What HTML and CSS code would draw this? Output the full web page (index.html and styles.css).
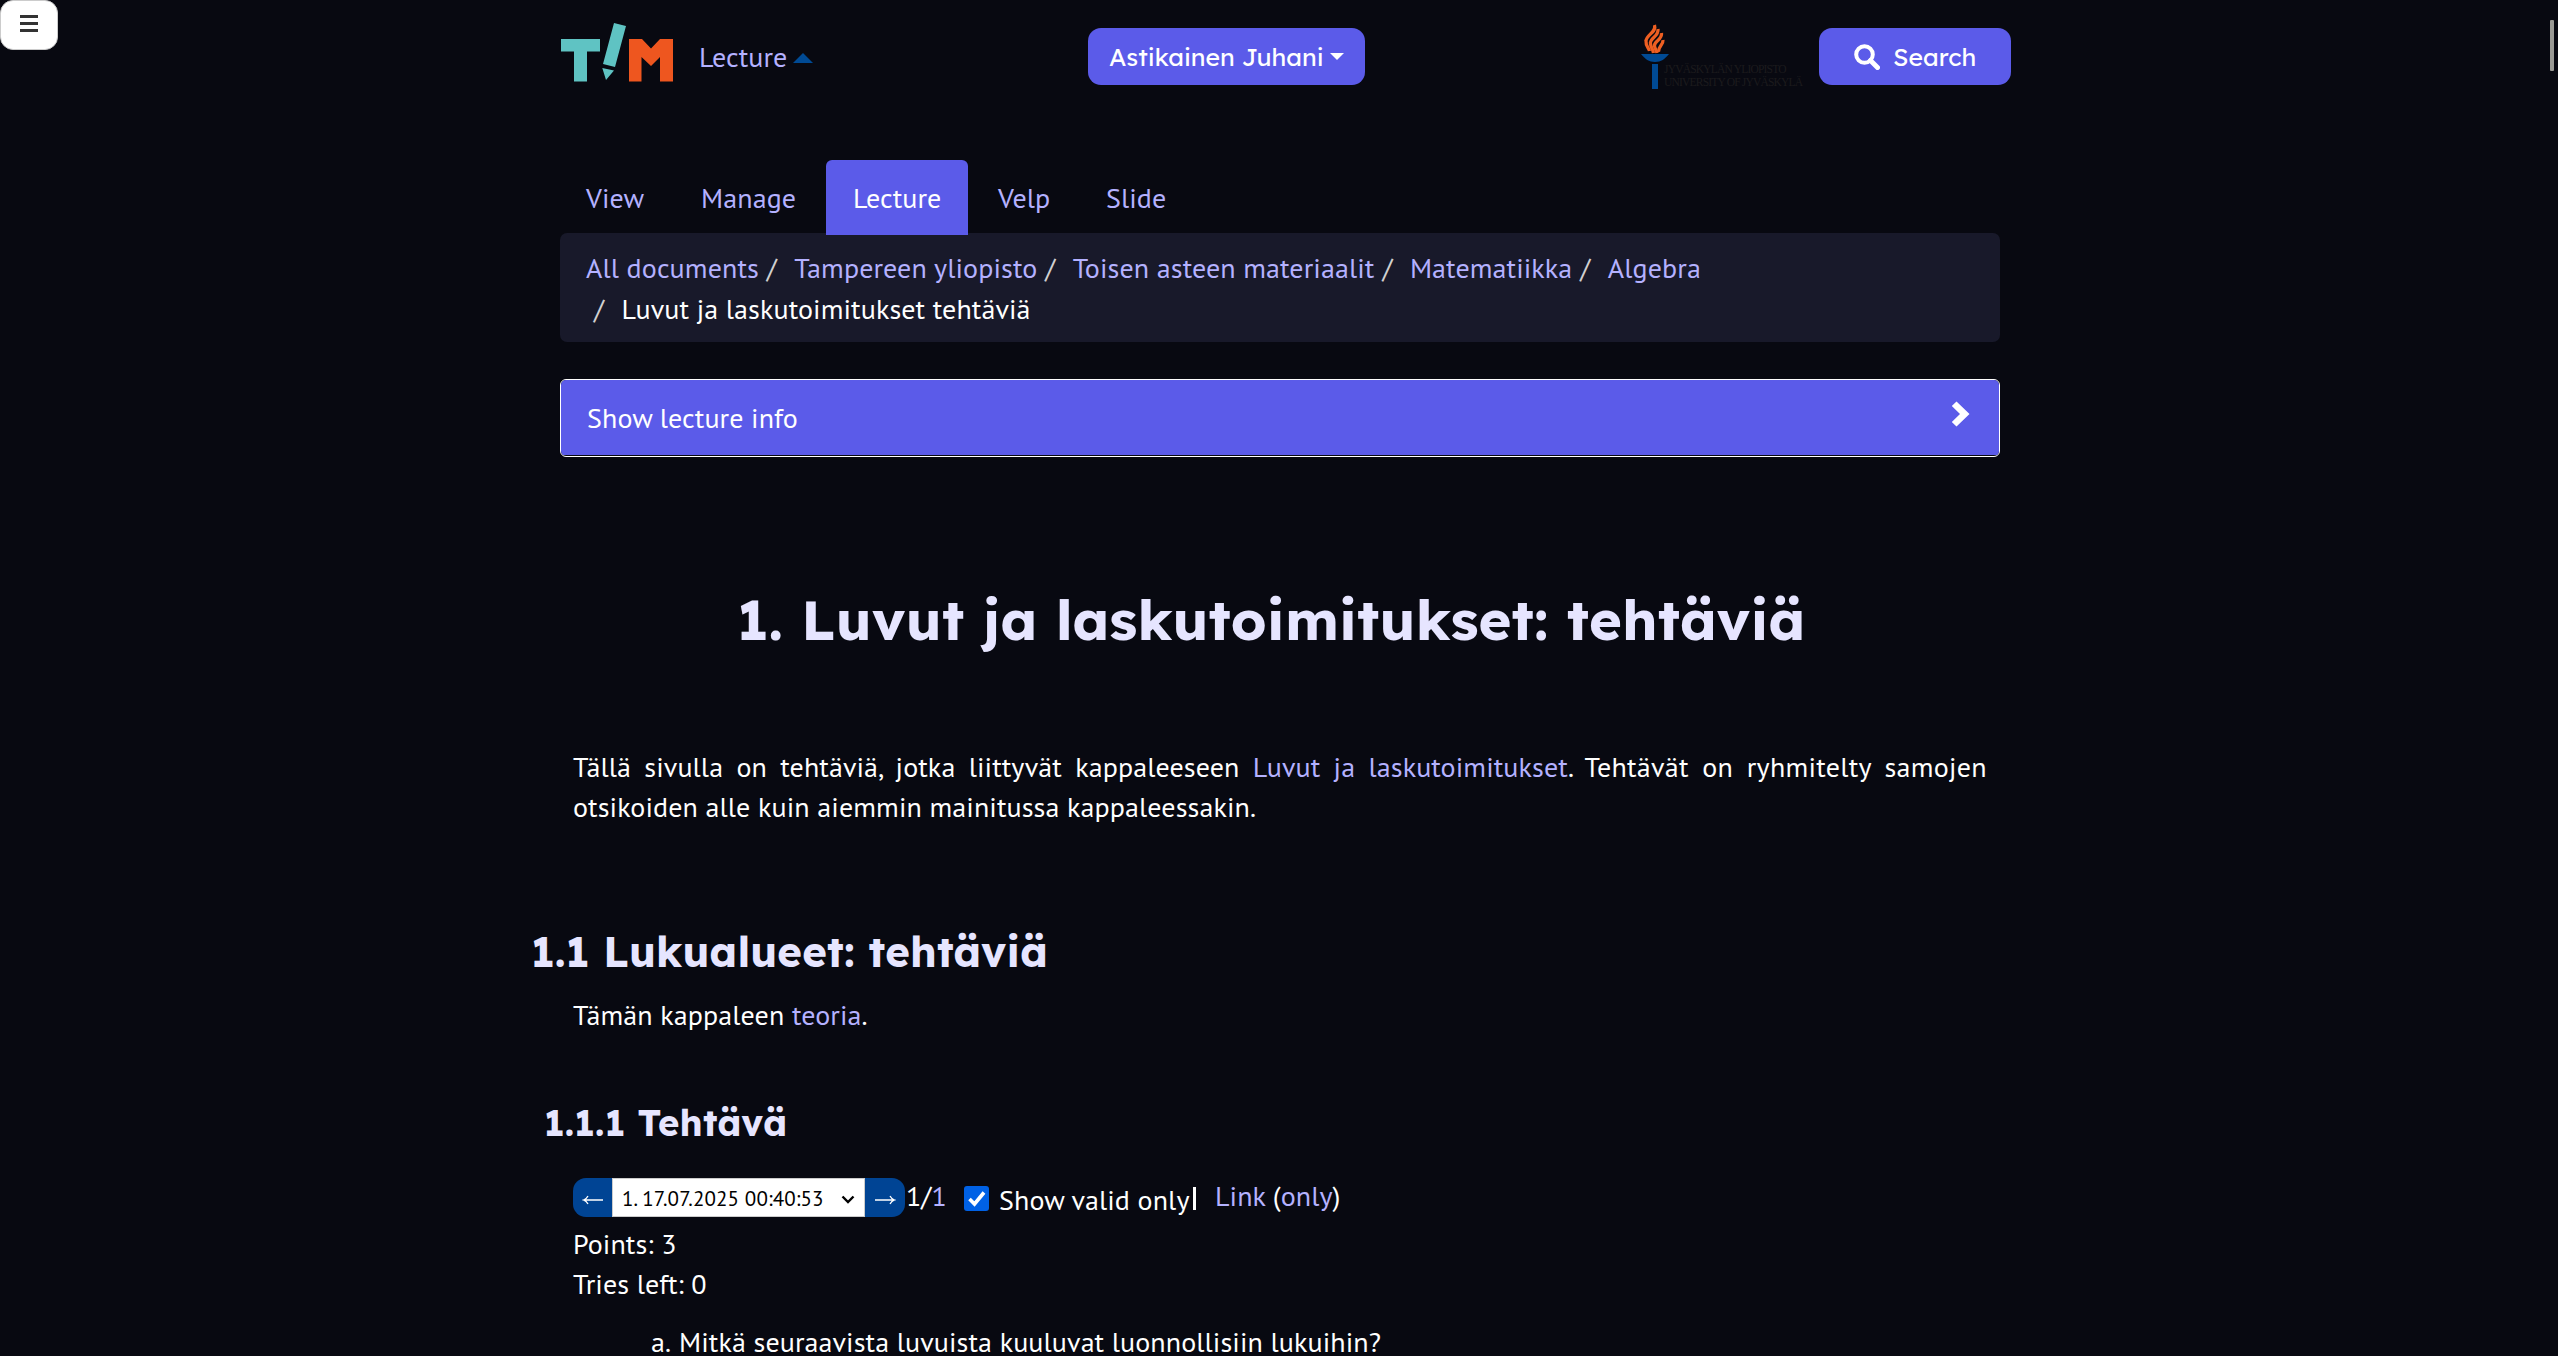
FILE: index.html
```html
<!DOCTYPE html>
<html lang="en">
<head>
<meta charset="utf-8">
<title>Luvut ja laskutoimitukset: tehtäviä</title>
<link rel="stylesheet" href="styles.css">
</head>
<body>
<button class="menu-toggle" aria-label="Menu"><i></i><i></i><i></i></button>
<div class="scroll-thumb"></div>
<div class="page">
  <header class="site-header">
    <div class="brand">
      <svg class="tim-logo" viewBox="0 0 114 62" width="114" height="62">
        <path fill="#5fc3c3" d="M1 19H40V31.500H27V61.500H14V31.500H1ZM54 3L66 6L55 47L43 44ZM42.300 48L54 50.500L46 60Z"/>
        <path fill="#ee561f" d="M69 19H82L91 28.500L100 19H113V61.500H100V37L91 46L81.500 37V61.500H69Z"/>
      </svg>
      <a class="brand-link">Lecture</a><span class="tri-up"></span>
    </div>
    <button class="btn user-btn"><span class="user-name">Astikainen Juhani</span><span class="tri-down"></span></button>
    <div class="university">
      <svg class="torch" viewBox="0 0 30 66" width="30" height="66">
        <g fill="none" stroke="#ee5f22" stroke-width="3.300">
          <path d="M14.500 1C17 8 6 11 6 17C5.500 22 9 24 9.500 27"/>
          <path d="M18 5C19 13 9 14 10.500 20C11 24 13 25 13.500 29"/>
          <path d="M21.500 9C22.500 16 13.500 17 14.500 22C15 25 16.500 26 17 29"/>
          <path d="M23 16C23.500 21 18 22 18.500 28"/>
        </g>
        <path fill="#004a94" d="M1 30H29C25 35 21 38 15 38S5 35 1 30ZM12 40H18V65H12Z"/>
      </svg>
      <div class="uni-name"><span>JYVÄSKYLÄN YLIOPISTO</span><span>UNIVERSITY OF JYVÄSKYLÄ</span></div>
    </div>
    <button class="btn search-btn">
      <svg viewBox="0 0 26 26" width="26" height="26"><circle cx="10.500" cy="10.500" r="8.300" fill="none" stroke="#fff" stroke-width="4"/><path d="M16.500 16.500L23.500 23.500" stroke="#fff" stroke-width="5" stroke-linecap="round"/></svg>
      <span class="search-label">Search</span>
    </button>
  </header>

  <nav class="tabs">
    <a class="tab t-view">View</a><a class="tab t-manage">Manage</a><a class="tab t-lecture active">Lecture</a><a class="tab t-velp">Velp</a><a class="tab t-slide">Slide</a>
  </nav>

  <div class="crumbs">
    <div class="crumb-row"><a>All documents</a><i>/</i><a>Tampereen yliopisto</a><i>/</i><a>Toisen asteen materiaalit</a><i>/</i><a>Matematiikka</a><i>/</i><a>Algebra</a></div>
    <div class="crumb-row"><i>/</i><span>Luvut ja laskutoimitukset tehtäviä</span></div>
  </div>

  <div class="lecture-info">
    <div class="lecture-bar"><span>Show lecture info</span>
    <svg viewBox="0 0 19 26" width="19" height="26"><path fill="#fff" d="M5.500 .5L18.500 13L5.500 25.500L.8 21L9 13L.8 5Z"/></svg></div>
  </div>

  <main class="doc">
    <h1>1. Luvut ja laskutoimitukset: tehtäviä</h1>
    <div class="para">
      <p class="justified">Tällä sivulla on tehtäviä, jotka liittyvät kappaleeseen <a>Luvut ja laskutoimitukset</a><span class="loose">. Tehtävät on ryhmitelty samojen</span></p>
      <p>otsikoiden alle kuin aiemmin mainitussa kappaleessakin.</p>
    </div>
    <h2>1.1 Lukualueet: tehtäviä</h2>
    <p class="line theory">Tämän kappaleen <a>teoria</a>.</p>
    <h3>1.1.1 Tehtävä</h3>
    <div class="answers">
      <div class="picker">
        <span class="arrow"><svg viewBox="0 0 22 10" width="22" height="10"><path d="M1.500 5H21M6 1C5 3 3 4.500 1.500 5C3 5.500 5 7 6 9" fill="none" stroke="#fff" stroke-width="1.300"/></svg></span>
        <span class="select"><span>1. 17.07.2025 00:40:53</span><svg viewBox="0 0 14 9" width="14" height="9"><path d="M1.500 1.500L7 7L12.500 1.500" fill="none" stroke="#000" stroke-width="2.400"/></svg></span>
        <span class="arrow next"><svg viewBox="0 0 22 10" width="22" height="10"><path d="M20.500 5H1M16 1C17 3 19 4.500 20.500 5C19 5.500 17 7 16 9" fill="none" stroke="#fff" stroke-width="1.300"/></svg></span>
      </div>
      <span class="count">1/<a>1</a></span>
      <span class="checkbox"><svg viewBox="0 0 25 25" width="25" height="25"><path d="M5.500 13L10.500 18L20 6.500" fill="none" stroke="#fff" stroke-width="3.600"/></svg></span>
      <span class="valid">Show valid only</span><span class="divider"></span>
      <span class="links"><a>Link</a> (<a>only</a>)</span>
    </div>
    <p class="line">Points: 3</p>
    <p class="line">Tries left: 0</p>
    <p class="line question"><span class="letter">a.</span><span>Mitkä seuraavista luvuista kuuluvat luonnollisiin lukuihin?</span></p>
  </main>
</div>
</body>
</html>
```

FILE: styles.css
```css
* { box-sizing: border-box; }
html { background: #080911; overflow: hidden; }
body {
  margin: 0;
  height: 1356px;
  overflow: hidden;
  background: #080911;
  color: #fff;
  font: 28px/40px "PT Sans", Lato, sans-serif;
  letter-spacing: 0.1px;
}
a { color: #b4b1ff; }
p, h1, h2, h3 { margin: 0; white-space: nowrap; }
svg { display: block; flex: none; }
button { border: 0; margin: 0; padding: 0; font: inherit; color: inherit; }

.menu-toggle {
  position: absolute; left: 0; top: 0;
  width: 58px; height: 50px;
  background: #fff; border: 1px solid #ccc; border-radius: 13px;
  display: flex; flex-direction: column; align-items: center; justify-content: center; gap: 4px;
  padding-bottom: 3px;
}
.menu-toggle i { width: 18px; height: 3px; background: #333; }
.scroll-thumb { position: absolute; left: 2550px; top: 20px; width: 4px; height: 51px; background: #9a9a95; border-radius: 1px; }

.page { width: 1452px; margin-left: 560px; }
.site-header { height: 160px; padding-top: 20px; display: flex; align-items: flex-start; }
.brand { width: 528px; display: flex; }
.brand-link { margin: 17px 0 0 25px; width: 88px; white-space: nowrap; }
.tri-up { margin: 33px 0 0 6px; border: 10px solid transparent; border-top: 0; border-bottom: 10px solid #004a94; height: 0; }
.btn { height: 57px; margin-top: 8px; background: #5b5be9; border-radius: 13px; display: flex; align-items: center; font: 400 24.8px/40px Lexend, Inter, sans-serif; letter-spacing: 0; white-space: nowrap; }
.user-btn { width: 277px; padding-left: 21px; }
.user-name { width: 214px; text-align: left; }
.tri-down { margin: 0 0 0 7px; border: 7px solid transparent; border-bottom: 0; border-top-color: #fff; }
.university { width: 454px; padding-left: 275px; display: flex; }
.torch { margin-top: 4px; }
.uni-name { margin: 43px 0 0 -6px; display: flex; flex-direction: column; color: #1c1b1d; font: 11.5px/13px "Liberation Serif", serif; letter-spacing: -0.8px; white-space: nowrap; }
.search-btn { width: 192px; padding-left: 35px; }
.search-label { margin-left: 13px; }

.tabs { display: flex; height: 73px; }
.tab { height: 75px; padding: 18px 0 0 26px; white-space: nowrap; border-radius: 6px 6px 0 0; }
.t-view { width: 115px; }
.t-manage { width: 151px; }
.t-lecture { width: 142px; padding-left: 27px; z-index: 1; }
.t-velp { width: 110px; padding-left: 30px; }
.t-slide { padding-left: 28px; }
.tab.active { background: #5b5be9; color: #fff; }

.crumbs { width: 1440px; height: 109px; padding: 15px 0 0 26px; background: #18192a; border-radius: 7px; }
.crumb-row { display: flex; height: 41px; white-space: nowrap; }
.crumb-row i { font-style: normal; color: #d0d0d0; width: 12px; margin: 0 15.5px 0 8px; }
.lecture-info { width: 1440px; height: 78px; margin-top: 37px; border: 1px solid #fff; border-radius: 6px; overflow: hidden; }
.lecture-bar { height: 75px; padding: 18px 29px 0 26px; background: #5b5be9; display: flex; justify-content: space-between; }
.lecture-bar svg { margin-top: 3px; }

h1, h2, h3 { font-family: Lexend, Inter, sans-serif; font-weight: 700; letter-spacing: 0.2px; color: #e6e5ff; }
h1 { margin-top: 122px; padding-left: 177px; font-size: 56px; line-height: 80px; }
.para { margin: 88px 0 0 13px; width: 1414px; }
.justified { text-align: justify; text-align-last: justify; white-space: normal; }
.loose { letter-spacing: 0.3px; }
h2 { margin: 95px 0 0 -29px; font-size: 42px; line-height: 60px; }
h3 { margin: 63px 0 0 -16px; font-size: 36.4px; line-height: 50px; letter-spacing: 0.3px; }
.answers { margin: 30px 0 0 13px; height: 46px; display: flex; white-space: nowrap; }
.picker { display: flex; height: 39px; }
.arrow { width: 39px; background: #004494; border-radius: 13px 0 0 13px; display: flex; align-items: center; justify-content: center; padding-top: 4px; }
.arrow.next { width: 40px; border-radius: 0 13px 13px 0; }
.select { width: 253px; background: #fff; border: 1px solid #ccc; color: #000; display: flex; align-items: center; padding: 3px 9px 0 9px; justify-content: space-between; font-size: 21px; line-height: 30px; }
.count { margin: -2px 0 0 1px; width: 39px; }
.checkbox { margin: 8px 0 0 19px; width: 25px; height: 25px; background: #0061e5; border-radius: 3px; }
.valid { margin: 2px 0 0 10px; width: 192px; }
.divider { margin: 9px 0 0 2px; width: 3px; height: 23px; background: #fff; }
.links { margin: -2px 0 0 19px; }
.doc > .line { margin-left: 13px; }
.doc > .theory { margin-top: 13px; }
.doc > .question { margin-top: 18px; padding-left: 78px; display: flex; }
.letter { width: 28px; }
```
